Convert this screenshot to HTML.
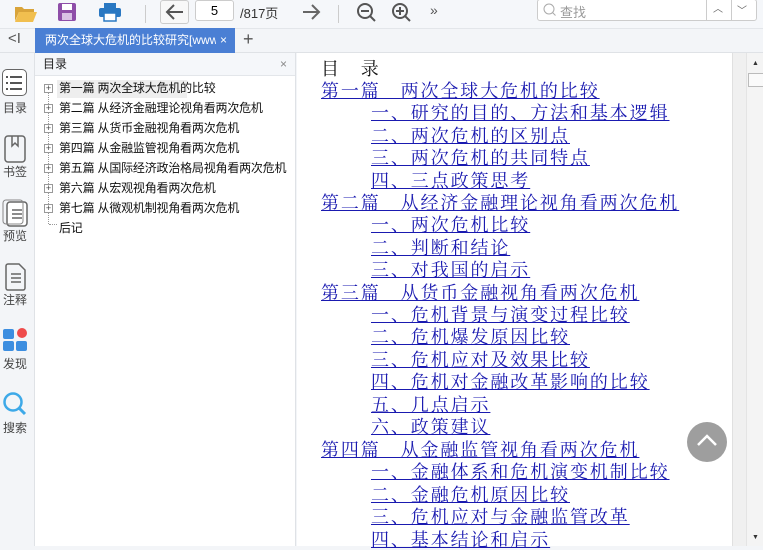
<!DOCTYPE html>
<html><head><meta charset="utf-8"><style>
*{margin:0;padding:0;box-sizing:border-box}
body{width:763px;height:546px;overflow:hidden;background:#f3f5f8;font-family:"Liberation Sans","Noto Sans CJK SC",sans-serif;position:relative}
.abs{position:absolute}
#tb{left:0;top:0;width:763px;height:28px;background:#f5f7fa}
#tabbar{left:0;top:28px;width:763px;height:25px;background:#f3f5f8;border-top:1px solid #e3e6ea;border-bottom:1px solid #dfe2e6}
#tab{left:35px;top:28px;width:200px;height:25px;background:#4a7fd4;color:#fff;font-size:12px;line-height:25px;padding-left:10px;white-space:nowrap;overflow:hidden}
#side{left:0;top:53px;width:35px;height:493px;background:#f3f5f8;border-right:1px solid #dfe2e6}
.si{position:absolute;left:0;width:30px;text-align:center;font-size:12px;color:#444}
#panel{left:35px;top:53px;width:261px;height:493px;background:#fff;border-right:1px solid #dfe2e6}
#ph{height:23px;background:#f5f7fa;font-size:12px;line-height:22px;padding-left:8px;color:#222;border-bottom:1px solid #e3e6ea}
.ti{position:absolute;left:24px;font-size:12px;color:#111;white-space:nowrap;height:18px;line-height:18px;letter-spacing:-0.2px}
.pl{position:absolute;left:9px;width:9px;height:9px;border:1px solid #999;font-size:9px;line-height:7px;text-align:center;color:#444;background:#fff}
#doc{left:297px;top:53px;width:435px;height:493px;background:#fff}
.dl{position:absolute;font-family:"Liberation Serif","Noto Serif CJK SC",serif;font-size:18px;color:#1a1ab0;text-decoration:underline;white-space:nowrap;line-height:20px;letter-spacing:1.9px}
#sb{left:732px;top:53px;width:31px;height:493px;background:#f0f0f0;border-left:1px solid #e0e0e0}
</style></head><body>
<div id="tb" class="abs">
<svg class="abs" style="left:14px;top:3px" width="24" height="20"><path d="M1 4h7l2 2h10v3H5L1 18z" fill="#d9a43a"/><path d="M5 9h18l-4 10H1z" fill="#f1bf4f"/></svg>
<svg class="abs" style="left:57px;top:2px" width="20" height="20"><rect x="1" y="1" width="18" height="18" rx="2" fill="#8e4ea8"/><rect x="5" y="2" width="10" height="6" fill="#fff"/><rect x="5" y="11" width="10" height="7" fill="#d9c2e5"/></svg>
<svg class="abs" style="left:98px;top:2px" width="24" height="20"><rect x="6" y="1" width="12" height="5" fill="#2a78c2"/><rect x="1" y="6" width="22" height="9" rx="2" fill="#2a78c2"/><rect x="6" y="11" width="12" height="8" fill="#fff" stroke="#2a78c2" stroke-width="1.5"/></svg>
<div class="abs" style="left:145px;top:5px;width:1px;height:18px;background:#ccc"></div>
<div class="abs" style="left:160px;top:0;width:29px;height:24px;border:1px solid #ccc;border-radius:3px;background:#f8f8f8"></div>
<svg class="abs" style="left:164px;top:2px" width="22" height="20"><path d="M19 10H4M10 3l-7 7 7 7" stroke="#555" stroke-width="2" fill="none"/></svg>
<div class="abs" style="left:195px;top:0;width:39px;height:21px;border:1px solid #ccc;border-radius:3px;background:#fff;font-size:13px;text-align:center;line-height:19px">5</div>
<div class="abs" style="left:240px;top:3px;font-size:13px;color:#333">/817页</div>
<svg class="abs" style="left:300px;top:2px" width="22" height="20"><path d="M3 10h15M12 3l7 7-7 7" stroke="#666" stroke-width="2" fill="none"/></svg>
<div class="abs" style="left:338px;top:5px;width:1px;height:18px;background:#ccc"></div>
<svg class="abs" style="left:356px;top:2px" width="22" height="22"><circle cx="9" cy="9" r="7" stroke="#555" stroke-width="2" fill="none"/><path d="M5 9h8M14 14l5 5" stroke="#555" stroke-width="2"/></svg>
<svg class="abs" style="left:391px;top:2px" width="22" height="22"><circle cx="9" cy="9" r="7" stroke="#555" stroke-width="2" fill="none"/><path d="M5 9h8M9 5v8M14 14l5 5" stroke="#555" stroke-width="2"/></svg>
<div class="abs" style="left:430px;top:2px;font-size:14px;color:#555">»</div>
<div class="abs" style="left:537px;top:-1px;width:220px;height:22px;border:1px solid #ccc;border-radius:3px;background:#fff"></div>
<svg class="abs" style="left:543px;top:3px" width="14" height="14"><circle cx="6" cy="6" r="5" stroke="#aaa" fill="none"/><path d="M9.5 9.5l3 3" stroke="#aaa"/></svg>
<div class="abs" style="left:560px;top:2px;font-size:13px;color:#999">查找</div>
<div class="abs" style="left:706px;top:-1px;width:1px;height:22px;background:#ccc"></div>
<div class="abs" style="left:731px;top:-1px;width:1px;height:22px;background:#ccc"></div>
<div class="abs" style="left:713px;top:0;font-size:10px;color:#666">︿</div>
<div class="abs" style="left:737px;top:2px;font-size:10px;color:#666">﹀</div>
</div>
<div id="tabbar" class="abs"><div class="abs" style="left:8px;top:1px;font-size:15px;color:#555">&lt;I</div><div class="abs" style="left:243px;top:0;font-size:18px;color:#555">+</div></div>
<div id="tab" class="abs">两次全球大危机的比较研究[www<span style="position:absolute;left:181px;top:0;background:#4a7fd4;padding:0 4px">×</span></div>
<div id="side" class="abs">
<div class="abs" style="left:2px;top:16px;width:25px;height:27px;border:1.5px solid #666;border-radius:5px;background:#fff"></div>
<svg class="abs" style="left:6px;top:21px" width="18" height="17"><g fill="#555"><rect x="0" y="2" width="2" height="2"/><rect x="4" y="2" width="12" height="2"/><rect x="0" y="8" width="2" height="2"/><rect x="4" y="8" width="12" height="2"/><rect x="0" y="14" width="2" height="2"/><rect x="4" y="14" width="12" height="2"/></g></svg>
<div class="si" style="top:46px">目录</div>
<svg class="abs" style="left:4px;top:82px" width="24" height="28"><rect x="1" y="1" width="20" height="26" rx="3" stroke="#666" stroke-width="1.5" fill="none"/><path d="M8 1v10l3-3 3 3V1" stroke="#666" stroke-width="1.5" fill="none"/></svg>
<div class="si" style="top:110px">书签</div>
<svg class="abs" style="left:2px;top:146px" width="26" height="28"><rect x="5" y="3" width="20" height="24" rx="3" stroke="#666" stroke-width="1.5" fill="#fff"/><rect x="1" y="1" width="20" height="24" rx="3" stroke="#888" fill="none"/><path d="M10 11h10M10 15h10M10 19h10" stroke="#666" stroke-width="1.5"/></svg>
<div class="si" style="top:174px">预览</div>
<svg class="abs" style="left:4px;top:210px" width="24" height="28"><path d="M2 3a2 2 0 012-2h11l6 6v18a2 2 0 01-2 2H4a2 2 0 01-2-2z" stroke="#666" stroke-width="1.5" fill="none"/><path d="M7 11h10M7 15h10M7 19h10" stroke="#666" stroke-width="1.5"/></svg>
<div class="si" style="top:238px">注释</div>
<svg class="abs" style="left:3px;top:274px" width="26" height="26"><rect x="0" y="2" width="11" height="10" rx="2" fill="#3d8ee0"/><circle cx="19" cy="6" r="5" fill="#ef4b4b"/><rect x="0" y="14" width="11" height="10" rx="2" fill="#3d8ee0"/><rect x="13" y="14" width="11" height="10" rx="2" fill="#3d8ee0"/></svg>
<div class="si" style="top:302px">发现</div>
<svg class="abs" style="left:2px;top:338px" width="26" height="26"><circle cx="11" cy="11" r="8.5" stroke="#3da9e8" stroke-width="2.5" fill="none"/><path d="M17 17l6 6" stroke="#3da9e8" stroke-width="3"/></svg>
<div class="si" style="top:366px">搜索</div>
</div>
<div id="panel" class="abs">
<div id="ph">目录<span style="position:absolute;right:8px;top:0;color:#888">×</span></div>
<div class="abs" style="left:13px;top:38px;width:0;height:133px;border-left:1px dotted #999"></div>
<div class="abs" style="left:22px;top:27px;width:130px;height:18px;background:#eee"></div>
<div class="pl" style="top:31px">+</div><div class="ti" style="top:26px">第一篇 两次全球大危机的比较</div>
<div class="pl" style="top:51px">+</div><div class="ti" style="top:46px">第二篇 从经济金融理论视角看两次危机</div>
<div class="pl" style="top:71px">+</div><div class="ti" style="top:66px">第三篇 从货币金融视角看两次危机</div>
<div class="pl" style="top:91px">+</div><div class="ti" style="top:86px">第四篇 从金融监管视角看两次危机</div>
<div class="pl" style="top:111px">+</div><div class="ti" style="top:106px">第五篇 从国际经济政治格局视角看两次危机</div>
<div class="pl" style="top:131px">+</div><div class="ti" style="top:126px">第六篇 从宏观视角看两次危机</div>
<div class="pl" style="top:151px">+</div><div class="ti" style="top:146px">第七篇 从微观机制视角看两次危机</div>
<div class="abs" style="left:14px;top:171px;width:8px;border-top:1px dotted #999"></div><div class="ti" style="top:166px">后记</div>
</div>
<div id="doc" class="abs">
<div class="dl" style="left:24px;top:6px;text-decoration:none;color:#111">目　录</div>
<div class="dl" style="left:24px;top:28px">第一篇　两次全球大危机的比较</div>
<div class="dl" style="left:74px;top:50px">一、研究的目的、方法和基本逻辑</div>
<div class="dl" style="left:74px;top:73px">二、两次危机的区别点</div>
<div class="dl" style="left:74px;top:95px">三、两次危机的共同特点</div>
<div class="dl" style="left:74px;top:118px">四、三点政策思考</div>
<div class="dl" style="left:24px;top:140px">第二篇　从经济金融理论视角看两次危机</div>
<div class="dl" style="left:74px;top:162px">一、两次危机比较</div>
<div class="dl" style="left:74px;top:185px">二、判断和结论</div>
<div class="dl" style="left:74px;top:207px">三、对我国的启示</div>
<div class="dl" style="left:24px;top:230px">第三篇　从货币金融视角看两次危机</div>
<div class="dl" style="left:74px;top:252px">一、危机背景与演变过程比较</div>
<div class="dl" style="left:74px;top:274px">二、危机爆发原因比较</div>
<div class="dl" style="left:74px;top:297px">三、危机应对及效果比较</div>
<div class="dl" style="left:74px;top:319px">四、危机对金融改革影响的比较</div>
<div class="dl" style="left:74px;top:342px">五、几点启示</div>
<div class="dl" style="left:74px;top:364px">六、政策建议</div>
<div class="dl" style="left:24px;top:387px">第四篇　从金融监管视角看两次危机</div>
<div class="dl" style="left:74px;top:409px">一、金融体系和危机演变机制比较</div>
<div class="dl" style="left:74px;top:432px">二、金融危机原因比较</div>
<div class="dl" style="left:74px;top:454px">三、危机应对与金融监管改革</div>
<div class="dl" style="left:74px;top:477px">四、基本结论和启示</div>
<div class="abs" style="left:390px;top:369px;width:40px;height:40px;border-radius:50%;background:#9e9e9e"></div>
<svg class="abs" style="left:398px;top:379px" width="24" height="16"><path d="M3 13l9-9 9 9" stroke="#fff" stroke-width="2.5" fill="none"/></svg>
</div>
<div id="sb" class="abs">
<div class="abs" style="left:13px;top:0;width:18px;height:493px;background:#f4f4f4;border-left:1px solid #e4e4e4"></div>
<div class="abs" style="left:19px;top:7px;font-size:7px;color:#333">▲</div>
<div class="abs" style="left:15px;top:20px;width:16px;height:14px;border:1px solid #bbb;background:#fafafa"></div>
<div class="abs" style="left:19px;top:481px;font-size:7px;color:#333">▼</div>
</div>
</body></html>
